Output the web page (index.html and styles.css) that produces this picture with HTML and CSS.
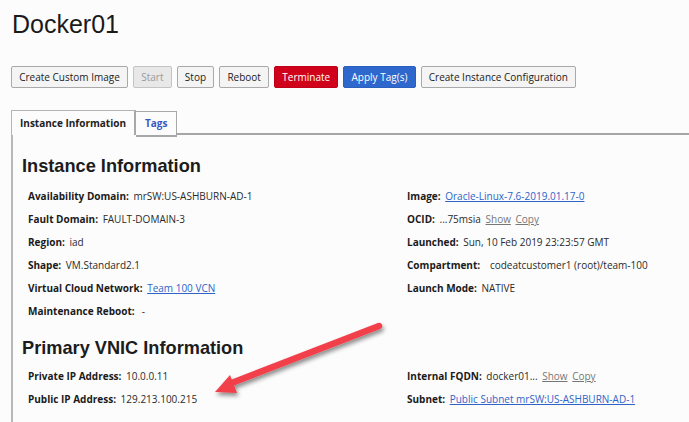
FILE: index.html
```html
<!DOCTYPE html>
<html>
<head>
<meta charset="utf-8">
<link rel="stylesheet" href="styles.css">
</head>
<body>
<div class="page">
  <h1 class="title">Docker01</h1>
  <div class="actions">
    <button class="btn">Create Custom Image</button>
    <button class="btn disabled">Start</button>
    <button class="btn">Stop</button>
    <button class="btn">Reboot</button>
    <button class="btn danger">Terminate</button>
    <button class="btn primary">Apply Tag(s)</button>
    <button class="btn">Create Instance Configuration</button>
  </div>
  <div class="tabs">
    <div class="tab active">Instance Information</div>
    <div class="tab link">Tags</div>
    <div class="tab-fill"></div>
  </div>
  <div class="panel">
    <h2 class="section">Instance Information</h2>
    <div class="grid">
      <div class="col">
        <div class="row"><b>Availability Domain:</b> mrSW:US-ASHBURN-AD-1</div>
        <div class="row"><b>Fault Domain:</b> FAULT-DOMAIN-3</div>
        <div class="row"><b>Region:</b> iad</div>
        <div class="row"><b>Shape:</b> VM.Standard2.1</div>
        <div class="row"><b>Virtual Cloud Network:</b> <a class="lnk">Team 100 VCN</a></div>
        <div class="row"><b>Maintenance Reboot:</b>&nbsp; -</div>
      </div>
      <div class="col">
        <div class="row"><b>Image:</b> <a class="lnk">Oracle-Linux-7.6-2019.01.17-0</a></div>
        <div class="row"><b>OCID:</b> ...75msia <a class="sub">Show</a> <a class="sub">Copy</a></div>
        <div class="row"><b>Launched:</b> Sun, 10 Feb 2019 23:23:57 GMT</div>
        <div class="row"><b>Compartment:</b>&nbsp;&nbsp; codeatcustomer1 (root)/team-100</div>
        <div class="row"><b>Launch Mode:</b> NATIVE</div>
      </div>
    </div>
    <h2 class="section second">Primary VNIC Information</h2>
    <div class="grid">
      <div class="col">
        <div class="row"><b>Private IP Address:</b> 10.0.0.11</div>
        <div class="row"><b>Public IP Address:</b> 129.213.100.215</div>
      </div>
      <div class="col">
        <div class="row"><b>Internal FQDN:</b> docker01... <a class="sub">Show</a> <a class="sub">Copy</a></div>
        <div class="row"><b>Subnet:</b> <a class="lnk">Public Subnet mrSW:US-ASHBURN-AD-1</a></div>
      </div>
    </div>
  </div>
</div>
<svg class="arrow" width="689" height="422" viewBox="0 0 689 422">
  <defs>
    <filter id="sh" x="-20%" y="-20%" width="140%" height="140%">
      <feDropShadow dx="1.5" dy="3" stdDeviation="2" flood-color="#000" flood-opacity="0.45"/>
    </filter>
  </defs>
  <g filter="url(#sh)">
    <line x1="379" y1="326" x2="229" y2="384" stroke="#f2404c" stroke-width="6.5" stroke-linecap="round"/>
    <polygon points="215,392 230,375 237,393" fill="#f2404c"/>
  </g>
</svg>
</body>
</html>
```

FILE: styles.css
```css
html, body {
  margin: 0;
  padding: 0;
  background: #fcfcfc;
  width: 689px;
  height: 422px;
  overflow: hidden;
}
body {
  position: relative;
  font-family: "Open Sans", "Noto Sans", sans-serif;
  font-size: 10px;
  color: #222;
}
.page {
  padding: 0 0 0 11px;
}
.title {
  margin: 0;
  padding-top: 9px;
  font-family: "Liberation Sans", Arial, sans-serif;
  font-weight: normal;
  font-size: 25px;
  line-height: 30px;
  color: #1a1a1a;
  height: 57px;
  padding-left: 1px;
}
.actions {
  display: flex;
  gap: 5px;
  height: 22px;
}
.btn {
  font-family: "Open Sans", sans-serif;
  font-size: 10px;
  height: 22px;
  padding: 0 7.2px;
  border: 1px solid #a9a9a9;
  border-radius: 2px;
  background: #f4f4f4;
  color: #222;
  line-height: 20px;
}
.btn.disabled {
  background: #e8e8e8;
  color: #9a9a9a;
  border-color: #c4c4c4;
}
.btn.danger {
  background: #d0011b;
  border-color: #c00018;
  color: #fff;
}
.btn.primary {
  background: #2e68cd;
  border-color: #2a5fbd;
  color: #fff;
}
.tabs {
  display: flex;
  margin-top: 22px;
  height: 25px;
}
.tab {
  font-weight: bold;
  font-size: 10px;
  line-height: 24px;
  padding: 0 8px;
  border: 1px solid #a8a8a8;
  border-bottom: none;
  white-space: nowrap;
}
.tab.active {
  border-width: 1px 2px 0 1px;
  border-color: #b4b4b4 #a8a8a8 #b4b4b4 #b4b4b4;
  color: #222;
}
.tab.link {
  color: #3a56c4;
  border-left: none;
  height: 23px;
  margin-top: 1px;
  padding: 0 9px;
  border-bottom: 2px solid #a6a6a6;
  line-height: 22px;
}
.tab-fill {
  flex: 1;
  border-bottom: 2px solid #a6a6a6;
}
.panel {
  border-left: 2px solid #b8b8b8;
  height: 300px;
  padding-left: 9px;
}
.section {
  margin: 0;
  padding-top: 19px;
  font-family: "Liberation Sans", Arial, sans-serif;
  font-size: 18.2px;
  font-weight: bold;
  line-height: 25px;
  color: #1c1c1c;
  height: 31px;
}
.section.second {
  padding-top: 13px;
  height: 29px;
}
.grid {
  display: grid;
  grid-template-columns: 379px 1fr;
  padding-left: 6px;
}
.row {
  height: 23px;
  line-height: 23px;
  white-space: nowrap;
  color: #2a2a2a;
}
.row b {
  color: #1a1a1a;
  margin-right: 2px;
}
.lnk {
  color: #2f63c8;
  text-decoration: underline;
}
.sub {
  color: #777;
  text-decoration: underline;
  margin-left: 2px;
}
.arrow {
  position: absolute;
  left: 0;
  top: 0;
  pointer-events: none;
}
```
